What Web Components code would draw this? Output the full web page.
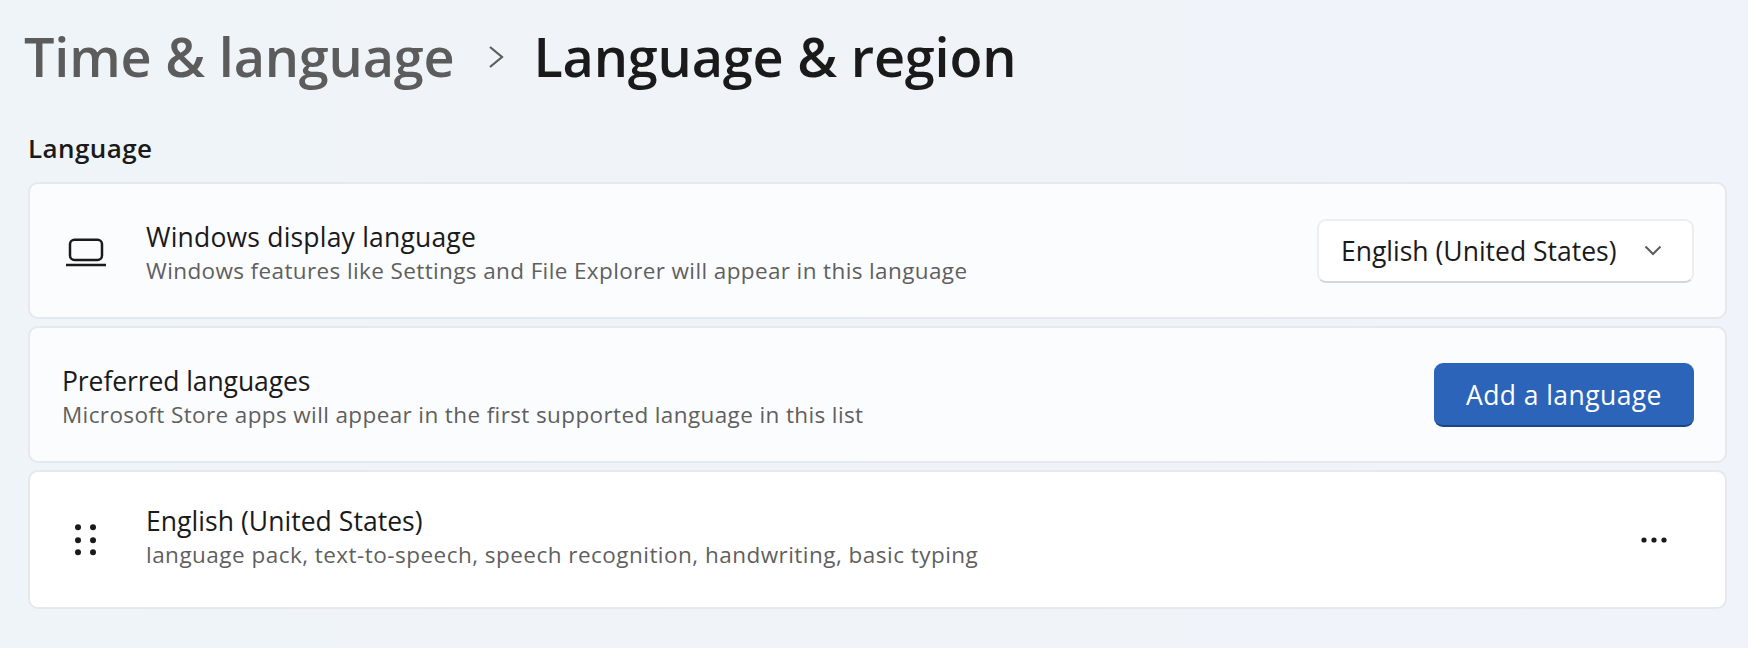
<!DOCTYPE html>
<html>
<head>
<meta charset="utf-8">
<style>
   html, body { margin: 0; height: 100%; }
   body {
      width: 1748px;
      height: 648px;
      overflow: hidden;
      background: linear-gradient(90deg, #eff4f8, #f0f3f9);
      font-family: "Open Sans", "Noto Sans", sans-serif;
      color: #1a1a1a;
   }
   settings-page { --sub: #5f5f5f; }
</style>
</head>
<body>

<settings-page>
   <page-title slot="title" parent="Time &amp; language" current="Language &amp; region"></page-title>
   <section-label slot="title">Language</section-label>

   <setting-row icon="laptop" label="Windows display language" sub="Windows features like Settings and File Explorer will appear in this language" tint="#fbfcfe" style="--h: 137px; --nudge: 5px; --label-ls: 0.2px; --sub-ls: 0.38px">
      <combo-box>English (United States)</combo-box>
   </setting-row>

   <setting-row label="Preferred languages" sub="Microsoft Store apps will appear in the first supported language in this list" tint="#fbfcfe" style="--h: 137px; --nudge: 4px; --label-ls: -0.09px; --sub-ls: 0.38px">
      <accent-button>Add a language</accent-button>
   </setting-row>

   <setting-row icon="grip" label="English (United States)" sub="language pack, text-to-speech, speech recognition, handwriting, basic typing" tint="#ffffff" style="--h: 139px; --nudge: -5px; --label-ls: 0.05px; --sub-ls: 0.47px">
      <more-icon></more-icon>
   </setting-row>
</settings-page>

<script>
// Page shell
class SettingsPage extends HTMLElement {
   connectedCallback() {
      const shadow = this.attachShadow({ mode: "open" });
      shadow.innerHTML = `
         <style>
            :host { display: block; box-sizing: border-box; padding: 0 21px 0 28px; }
            .rows { display: flex; flex-direction: column; gap: 7px; }
         </style>
         <slot name="title"></slot>
         <div class="rows"><slot></slot></div>
      `;
   }
}

// Breadcrumb title
class PageTitle extends HTMLElement {
   connectedCallback() {
      const shadow = this.attachShadow({ mode: "open" });
      shadow.innerHTML = `
         <style>
            :host {
               display: flex;
               align-items: center;
               height: 112px;
               margin-left: -4px;
               font-size: 54px;
               font-weight: 600;
               letter-spacing: -0.2px;
            }
            .parent { color: #5c5c5c; }
            .current { color: #1a1a1a; }
            svg { margin: 2px 29px 0 34px; flex: none; }
         </style>
         <span class="parent"></span>
         <svg width="16" height="24" viewBox="0 0 16 24"><path d="M2 2 L14 12 L2 22" fill="none" stroke="#5c5c5c" stroke-width="2.2"/></svg>
         <span class="current"></span>
      `;
      shadow.querySelector(".parent").textContent = this.getAttribute("parent");
      shadow.querySelector(".current").textContent = this.getAttribute("current");
   }
}

// Small section heading
class SectionLabel extends HTMLElement {
   connectedCallback() {
      const shadow = this.attachShadow({ mode: "open" });
      shadow.innerHTML = `
         <style>
            :host {
               display: block;
               height: 70px;
               line-height: 73px;
               font-size: 26px;
               font-weight: 600;
               letter-spacing: 0.4px;
            }
         </style>
         <slot></slot>
      `;
   }
}

const ROW_ICONS = {
   laptop: `<svg width="44" height="44" viewBox="0 0 44 44" fill="none" stroke="#1a1a1a" stroke-width="2.5">
      <rect x="6" y="10.75" width="32" height="20.2" rx="4.5"/><path d="M2 36 H42"/></svg>`,
   grip: `<svg width="44" height="44" viewBox="0 0 44 44" fill="#1a1a1a">
      <circle cx="14" cy="9.3" r="3"/><circle cx="29" cy="9.3" r="3"/>
      <circle cx="14" cy="22.3" r="3"/><circle cx="29" cy="22.3" r="3"/>
      <circle cx="14" cy="34.3" r="3"/><circle cx="29" cy="34.3" r="3"/></svg>`
};

// One row card of the settings list
class SettingRow extends HTMLElement {
   connectedCallback() {
      const shadow = this.attachShadow({ mode: "open" });
      const icon = ROW_ICONS[this.getAttribute("icon")] || "";
      shadow.innerHTML = `
         <style>
            :host {
               display: flex;
               align-items: center;
               box-sizing: border-box;
               height: var(--h);
               padding: 0 31px 0 32px;
               background: ${this.getAttribute("tint")};
               border: 2px solid #e5e8ec;
               border-radius: 10px;
            }
            .icon { width: 44px; height: 44px; margin: 0 38px 0 2px; flex: none; }
            .text { flex: 1; min-width: 0; margin-top: var(--nudge); }
            .label { font-size: 26.5px; line-height: 36px; letter-spacing: var(--label-ls); }
            .sub { font-size: 22.5px; line-height: 32px; letter-spacing: var(--sub-ls); color: var(--sub); }
         </style>
         ${icon ? `<div class="icon">${icon}</div>` : ""}
         <div class="text">
            <div class="label"></div>
            <div class="sub"></div>
         </div>
         <slot></slot>
      `;
      shadow.querySelector(".label").textContent = this.getAttribute("label");
      shadow.querySelector(".sub").textContent = this.getAttribute("sub");
   }
}

// Dropdown
class ComboBox extends HTMLElement {
   connectedCallback() {
      const shadow = this.attachShadow({ mode: "open" });
      shadow.innerHTML = `
         <style>
            :host {
               display: flex;
               align-items: center;
               justify-content: space-between;
               box-sizing: border-box;
               width: 377px;
               height: 64px;
               padding: 0 30px 0 22px;
               background: #ffffff;
               border: 2px solid #eceef0;
               border-bottom-color: #d4d6d9;
               border-radius: 9px;
               font-size: 26.5px;
               letter-spacing: 0;
            }
            svg { flex: none; }
         </style>
         <slot></slot>
         <svg width="18" height="11" viewBox="0 0 18 11"><path d="M1.5 1.5 L9 9 L16.5 1.5" fill="none" stroke="#5c5c5c" stroke-width="2"/></svg>
      `;
   }
}

// Accent button
class AccentButton extends HTMLElement {
   connectedCallback() {
      const shadow = this.attachShadow({ mode: "open" });
      shadow.innerHTML = `
         <style>
            :host {
               display: flex;
               align-items: center;
               justify-content: center;
               box-sizing: border-box;
               width: 260px;
               height: 64px;
               padding-top: 3px;
               background: #2b64b8;
               border-bottom: 2px solid #1c4585;
               border-radius: 9px;
               color: #ffffff;
               font-size: 26.5px;
               letter-spacing: 0.42px;
            }
         </style>
         <slot></slot>
      `;
   }
}

// Three dots menu
class MoreIcon extends HTMLElement {
   connectedCallback() {
      const shadow = this.attachShadow({ mode: "open" });
      shadow.innerHTML = `
         <style>
            :host { display: block; width: 28px; height: 6px; margin-right: 26px; line-height: 0; }
         </style>
         <svg width="28" height="6" viewBox="0 0 28 6" fill="#1a1a1a">
            <circle cx="4" cy="3" r="2.6"/><circle cx="14" cy="3" r="2.6"/><circle cx="24" cy="3" r="2.6"/>
         </svg>
      `;
   }
}

customElements.define("settings-page", SettingsPage);
customElements.define("page-title", PageTitle);
customElements.define("section-label", SectionLabel);
customElements.define("setting-row", SettingRow);
customElements.define("combo-box", ComboBox);
customElements.define("accent-button", AccentButton);
customElements.define("more-icon", MoreIcon);
</script>
</body>
</html>
